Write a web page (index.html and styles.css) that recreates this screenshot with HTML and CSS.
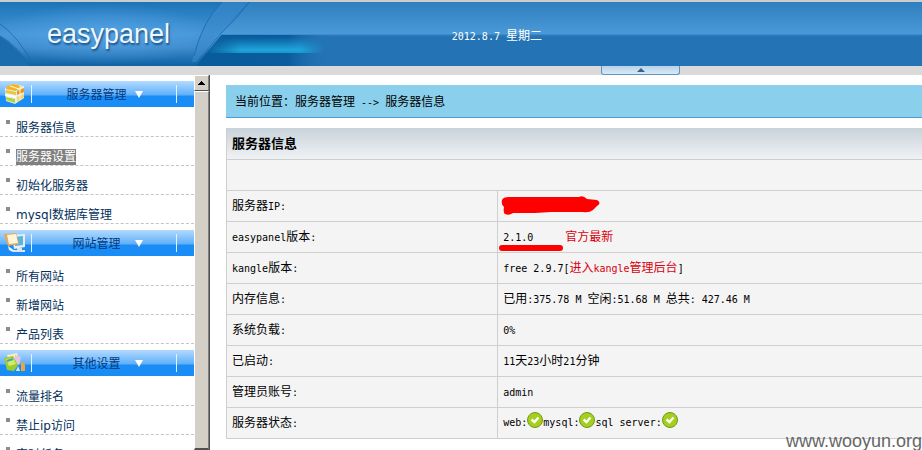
FILE: index.html
```html
<!DOCTYPE html>
<html lang="zh-CN">
<head>
    <meta charset="UTF-8">
    <meta name="viewport" content="width=device-width, initial-scale=1.0">
    <title>easypanel</title>
    <link rel="stylesheet" href="styles.css">
</head>
<body>

    <header class="header">
        <svg class="header-art" width="400" height="64" viewBox="0 0 400 64" aria-hidden="true">
            <defs>
                <linearGradient id="panel" x1="0" y1="0" x2="0" y2="1">
                    <stop offset="0" stop-color="#1c74b6"/>
                    <stop offset="0.5" stop-color="#4596d8"/>
                    <stop offset="0.7" stop-color="#3d8bcd"/>
                    <stop offset="1" stop-color="#0f62a4"/>
                </linearGradient>
                <radialGradient id="shine">
                    <stop offset="0" stop-color="#5aa9ea" stop-opacity="0.7"/>
                    <stop offset="1" stop-color="#5aa9ea" stop-opacity="0"/>
                </radialGradient>
                <linearGradient id="fade" x1="0" y1="0" x2="1" y2="0">
                    <stop offset="0" stop-color="#085c9c"/>
                    <stop offset="0.7" stop-color="#0a5c9c"/>
                    <stop offset="1" stop-color="#2474b5" stop-opacity="0"/>
                </linearGradient>
                <linearGradient id="cyan" x1="0" y1="0" x2="0" y2="1">
                    <stop offset="0" stop-color="#1fa0d8" stop-opacity="0"/>
                    <stop offset="0.8" stop-color="#1fa4da"/>
                    <stop offset="1" stop-color="#1fa4da" stop-opacity="0.8"/>
                </linearGradient>
                <linearGradient id="cyanSide" x1="0" y1="0" x2="1" y2="0">
                    <stop offset="0" stop-color="#fff" stop-opacity="0"/>
                    <stop offset="0.3" stop-color="#fff"/>
                    <stop offset="0.8" stop-color="#fff"/>
                    <stop offset="1" stop-color="#fff" stop-opacity="0"/>
                </linearGradient>
                <mask id="cyanMask"><rect x="205" y="33" width="120" height="18" fill="url(#cyanSide)"/></mask>
            </defs>
            <rect x="190" y="33" width="140" height="31" fill="url(#fade)"/>
            <rect x="205" y="35" width="120" height="16" fill="url(#cyan)" mask="url(#cyanMask)"/>
            <path d="M0 0H249C234 20 214 40 196 64H0Z" fill="url(#panel)"/>
            <ellipse cx="105" cy="32" rx="115" ry="30" fill="url(#shine)"/>
            <path d="M0 34Q16 44 30 64H0Z" fill="#1a6cad"/>
            <path d="M222 0Q200 22 192 60L196 60Q216 32 249 0Z" fill="#3a8bcb" opacity="0.6"/>
            <g fill="none" stroke="#1d67a8" stroke-width="1" opacity="0.8">
                <path d="M0 22Q18 34 34 64"/>
                <path d="M0 34Q16 42 30 64"/>
                <path d="M222 0Q202 20 194 54"/>
                <path d="M249 0Q238 16 222 30Q208 46 198 60"/>
            </g>
        </svg>
        <h1 class="logo">easypanel</h1>
        <div class="date"><span class="en">2012.8.7 </span>星期二</div>
    </header>
    <div class="strip">
        <button class="toggle" aria-label="收起"><svg width="8" height="4" viewBox="0 0 8 4"><path d="M4 0L8 4H0Z" fill="#35648c"/></svg></button>
    </div>

    <div class="content">
        <nav class="sidebar">
            <section class="menu">
                <h2 class="menu-title">
                    <svg class="menu-icon" width="22" height="22" viewBox="0 0 22 22">
                        <path d="M1 5L9 1L20 3V15L11 21L2 18Z" fill="#e4eef2"/>
                        <path d="M2 4L9 1L18 3L12 8L2 6Z" fill="#f2b51c"/>
                        <path d="M2 7L12 9V12L2 10Z" fill="#e9c63a"/>
                        <path d="M1 11L12 13V15L1 13Z" fill="#fff"/>
                        <path d="M2 14L11 16V20L2 17Z" fill="#b6d23a"/>
                        <path d="M13 8L20 5V9L13 12Z" fill="#f0951c"/>
                        <path d="M13 14L20 11V15L13 19Z" fill="#f8d763"/>
                        <path d="M16 2V17M6 3L15 6" stroke="#fff6d0" stroke-width="1"/>
                    </svg>
                    <span class="menu-text">服务器管理</span>
                </h2>
                <ul>
                    <li><a href="#">服务器信息</a></li>
                    <li><a href="#" class="selected">服务器设置</a></li>
                    <li><a href="#">初始化服务器</a></li>
                    <li><a href="#">mysql数据库管理</a></li>
                </ul>
            </section>
            <section class="menu">
                <h2 class="menu-title">
                    <svg class="menu-icon" width="22" height="22" viewBox="0 0 22 22">
                        <path d="M8 3L21 2V15L10 17Z" fill="#e8eef2"/>
                        <path d="M10 5L19 4V13L11 14Z" fill="#58b5dd"/>
                        <path d="M13 16H18V18H21V20H10V18H13Z" fill="#dfe3e6"/>
                        <path d="M0 2L12 1L15 12L4 14Z" fill="#e9a84d"/>
                        <path d="M3 3L12 2L14 11L5 12Z" fill="#fff5db"/>
                        <path d="M4 14L11 19L9 20L5 18Z" fill="#f6f6f6"/>
                    </svg>
                    <span class="menu-text">网站管理</span>
                </h2>
                <ul>
                    <li><a href="#">所有网站</a></li>
                    <li><a href="#">新增网站</a></li>
                    <li><a href="#">产品列表</a></li>
                </ul>
            </section>
            <section class="menu">
                <h2 class="menu-title">
                    <svg class="menu-icon" width="22" height="22" viewBox="0 0 22 22">
                        <path d="M3 3L13 1L16 10L6 12Z" fill="#f5edc8"/>
                        <path d="M11 3L17 5L15 13L10 11Z" fill="#e3c4e0"/>
                        <path d="M0 6L9 4L14 13L10 19L3 18Z" fill="#9ccb2c"/>
                        <path d="M2 7L9 6L12 12L5 14Z" fill="#d2ea6e"/>
                        <path d="M3 9L9 7" stroke="#4aa0b8" stroke-width="2"/>
                        <path d="M14 14L16 19L12 19Z" fill="#d8e8f2"/>
                        <path d="M18 9L21 13V19H17V13Z" fill="#f0a53a"/>
                    </svg>
                    <span class="menu-text">其他设置</span>
                </h2>
                <ul>
                    <li><a href="#">流量排名</a></li>
                    <li><a href="#">禁止ip访问</a></li>
                    <li><a href="#">定时任务</a></li>
                </ul>
            </section>
        </nav>
        <div class="scrollbar">
            <button class="scroll-up" aria-label="向上滚动"><svg width="7" height="4" viewBox="0 0 7 4"><path d="M3 0H4V1H5V2H6V3H7V4H0V3H1V2H2V1H3Z" fill="#000"/></svg></button>
            <div class="scroll-thumb"></div>
        </div>

        <main class="main">
            <div class="location">当前位置：服务器管理<span class="en"> --&gt; </span>服务器信息</div>
            <table class="info">
                <colgroup>
                    <col class="name">
                    <col>
                </colgroup>
                <thead>
                    <tr><th colspan="2">服务器信息</th></tr>
                </thead>
                <tbody>
                    <tr><td colspan="2"></td></tr>
                    <tr>
                        <td>服务器<span class="en">IP:</span></td>
                        <td>
                            <svg class="scribble" width="100" height="20" viewBox="0 0 100 20"><path d="M1 4Q2 1 8 1H78Q82 -1 86 3L96 4Q101 7 96 10L92 14Q88 17 82 16H50L34 17H12Q8 20 4 18Q2 17 3 11Q0 9 1 4Z" fill="#f00"/></svg>
                        </td>
                    </tr>
                    <tr>
                        <td><span class="en">easypanel</span>版本<span class="en">:</span></td>
                        <td class="version">
                            <span class="en number">2.1.0</span><a href="#" class="red">官方最新</a>
                            <svg class="underline" width="66" height="7" viewBox="0 0 66 7"><path d="M4 3H62" stroke="#f00" stroke-width="6" stroke-linecap="round"/></svg>
                        </td>
                    </tr>
                    <tr>
                        <td><span class="en">kangle</span>版本<span class="en">:</span></td>
                        <td><span class="en">free 2.9.7[</span><a href="#" class="red">进入<span class="en">kangle</span>管理后台</a><span class="en">]</span></td>
                    </tr>
                    <tr>
                        <td>内存信息<span class="en">:</span></td>
                        <td>已用<span class="en">:375.78 M </span>空闲<span class="en">:51.68 M </span>总共<span class="en">: 427.46 M</span></td>
                    </tr>
                    <tr>
                        <td>系统负载<span class="en">:</span></td>
                        <td><span class="en">0%</span></td>
                    </tr>
                    <tr>
                        <td>已启动<span class="en">:</span></td>
                        <td><span class="en">11</span>天<span class="en">23</span>小时<span class="en">21</span>分钟</td>
                    </tr>
                    <tr>
                        <td>管理员账号<span class="en">:</span></td>
                        <td><span class="en">admin</span></td>
                    </tr>
                    <tr>
                        <td>服务器状态<span class="en">:</span></td>
                        <td>
                            <div class="status">
                                <span class="en">web:</span><svg class="ok" width="16" height="16" viewBox="0 0 16 16"><circle cx="8" cy="8" r="7.5" fill="#a5cf1c" stroke="#6f9a1b"/><path d="M4.5 7.5L7.5 10L11.5 5.5" fill="none" stroke="#fff" stroke-width="2.4"/></svg><span class="en">mysql:</span><svg class="ok" width="16" height="16" viewBox="0 0 16 16"><circle cx="8" cy="8" r="7.5" fill="#a5cf1c" stroke="#6f9a1b"/><path d="M4.5 7.5L7.5 10L11.5 5.5" fill="none" stroke="#fff" stroke-width="2.4"/></svg><span class="en">sql server:</span><svg class="ok" width="16" height="16" viewBox="0 0 16 16"><circle cx="8" cy="8" r="7.5" fill="#a5cf1c" stroke="#6f9a1b"/><path d="M4.5 7.5L7.5 10L11.5 5.5" fill="none" stroke="#fff" stroke-width="2.4"/></svg>
                            </div>
                        </td>
                    </tr>
                </tbody>
            </table>
        </main>
    </div>

    <div class="watermark">www.wooyun.org</div>

</body>
</html>
```
FILE: styles.css
```css
* {
    box-sizing: border-box;
}

body {
    margin: 0;
    height: 100vh;
    display: flex;
    flex-direction: column;
    overflow: hidden;
    background: #fff;
    color: #000;
    font-family: "Noto Sans CJK SC", sans-serif;
    font-size: 12px;
    line-height: 16px;
}

h1, h2, ul {
    margin: 0;
    padding: 0;
}

a {
    color: #03305c;
    text-decoration: none;
}

button {
    padding: 0;
    display: flex;
    align-items: center;
    justify-content: center;
}

/* latin text is half the width of a chinese character */
.en {
    font-family: "DejaVu Sans Mono", monospace;
    font-size: 10px;
    white-space: pre;
}

/* header */
.header {
    position: relative;
    flex: none;
    display: flex;
    align-items: center;
    height: 66px;
    border-top: 2px solid #c9cdd0;
    background: linear-gradient(#2f7fbe 0, #4a9ada 32px, #2f7cbb 33px, #2474b5 35px, #2474b5 100%);
}

.header-art {
    position: absolute;
    left: 0;
    top: 0;
}

.logo {
    position: relative;
    width: 49%;
    padding-left: 47px;
    color: #eef7ff;
    font: 27px/32px "Liberation Sans", Arial, sans-serif;
    text-shadow: 1px 2px 2px #1b4f80;
}

.date {
    padding-top: 4px;
    color: #fff;
}

.strip {
    flex: none;
    display: flex;
    justify-content: flex-end;
    height: 9px;
    padding-right: 242px;
    background: #dadada;
}

.toggle {
    width: 79px;
    height: 9px;
    border: 1px solid #5e96bf;
    border-top: 0;
    border-radius: 0 0 3px 3px;
    background: linear-gradient(#b5d3ea, #d9e9f5);
}

.content {
    flex: 1;
    display: flex;
    min-height: 0;
}

/* sidebar */
.sidebar {
    width: 194px;
    flex: none;
    overflow: hidden;
    padding-top: 6px;
}

.menu {
    margin-bottom: 6px;
}

.menu-title {
    display: flex;
    align-items: center;
    height: 26px;
    padding: 0 17px 0 4px;
    background: linear-gradient(#b4dafe 0, #5eb0fa 14px, #1a8cf6 15px, #1a8cf6 100%);
    color: #03397c;
    font-size: 12px;
    font-weight: normal;
}

.menu-text {
    flex: 1;
    display: grid;
    grid-template-columns: 1fr 8px;
    align-items: center;
    height: 18px;
    margin-left: 5px;
    padding: 0 33px 0 26px;
    border-left: 1px solid #e4f3ff;
    border-right: 1px solid #e4f3ff;
    text-align: center;
}

.menu-text::after {
    content: "";
    border: 4px solid transparent;
    border-top: 7px solid #fff;
    border-bottom: 0;
}

.menu ul {
    padding-top: 1px;
    list-style: none;
}

.menu li {
    display: flex;
    height: 29px;
    padding-left: 6px;
    border-bottom: 1px dashed #c4c4c4;
}

.menu li::before {
    content: "";
    width: 4px;
    height: 4px;
    margin: 12px 6px 0 0;
    background: #8c8c8c;
}

.menu li a {
    height: 16px;
    margin-top: 12px;
    font-family: "DejaVu Sans", "Noto Sans CJK SC", sans-serif;
}

.menu li .selected {
    background: #808080;
    color: #fff;
}

.scrollbar {
    width: 16px;
    flex: none;
    display: flex;
    flex-direction: column;
    border-right: 1px solid #505050;
    background: #d4d0c8;
}

.scroll-up {
    height: 16px;
    border: 1px solid #fff;
    border-right-color: #808080;
    border-bottom-color: #505050;
    background: #d4d0c8;
}

.scroll-thumb {
    flex: 1;
    border: 1px solid #fff;
    border-right-color: #808080;
    border-bottom: 2px solid #505050;
}

/* main */
.main {
    flex: 1;
    min-width: 0;
    padding: 10px 0 0 16px;
}

.location {
    height: 33px;
    padding-left: 9px;
    border-bottom: 1px solid #4c9bd3;
    background: #8ad0ec;
    line-height: 32px;
}

.info {
    width: 100%;
    margin-top: 10px;
    border-collapse: collapse;
    table-layout: fixed;
}

.info .name {
    width: 39%;
}

.info th {
    height: 31px;
    padding: 0 5px;
    background: linear-gradient(#c8d2da, #eff2f5);
    border-left: 1px solid #cfcfcf;
    font-size: 13px;
    text-align: left;
}

.info td {
    height: 31px;
    padding: 0 5px;
    border: 1px solid #cfcfcf;
    border-right: 0;
    background: #f4f4f4;
}

.info .red {
    color: #d9000d;
}

.scribble {
    display: block;
    margin-left: -2px;
}

.version {
    position: relative;
}

.version .number {
    display: inline-block;
    width: 62px;
}

.underline {
    position: absolute;
    left: 0;
    bottom: 0;
}

.status {
    display: flex;
    align-items: center;
}

.ok {
    margin-bottom: 6px;
}

.watermark {
    position: absolute;
    right: 0;
    bottom: 0;
    color: #666;
    font: 18px/18px "Liberation Sans", Arial, sans-serif;
}
```
